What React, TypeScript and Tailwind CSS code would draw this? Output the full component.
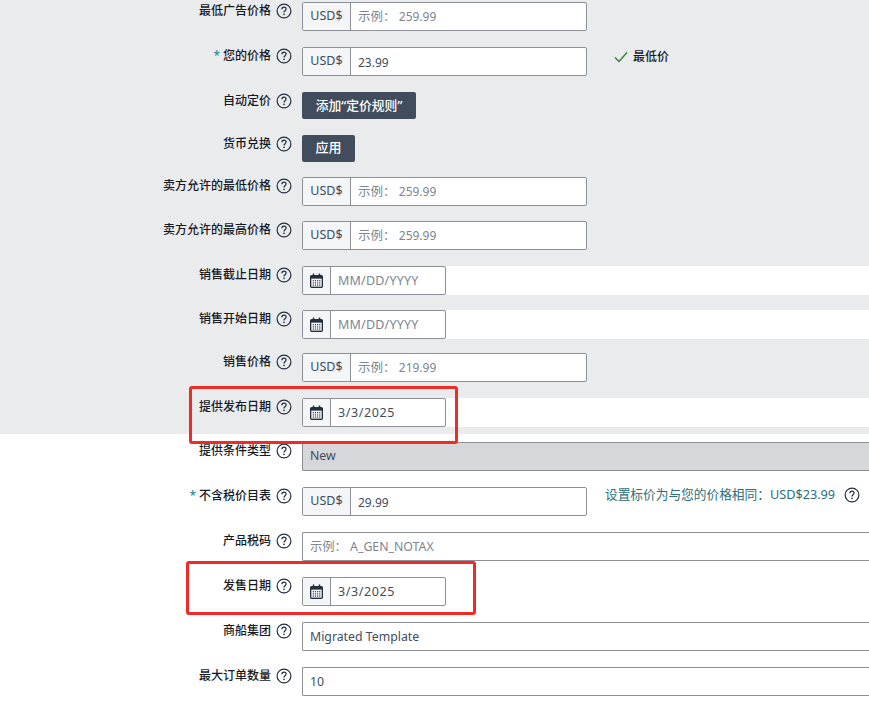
import React from "react";

function Help() {
  return (
    <svg width="16" height="16" viewBox="0 0 16 16" fill="none" className="shrink-0">
      <circle cx="8" cy="8" r="6.9" stroke="#232f3e" strokeWidth="1.2" />
      <path d="M5.9 6.3C5.9 5 6.9 4.2 8 4.2c1.2 0 2.1.8 2.1 1.9 0 1.7-2.1 1.7-2.1 3.4" stroke="#232f3e" strokeWidth="1.2" />
      <circle cx="8" cy="11.4" r="0.8" fill="#232f3e" />
    </svg>
  );
}

function Calendar() {
  return (
    <svg width="13" height="15" viewBox="0 0 14 16" className="shrink-0 -mt-[1px]">
      <path d="M3 0.5h1.6V2h4.8V0.5H11V2h1.2C13.2 2 14 2.8 14 3.8v10.4c0 1-.8 1.8-1.8 1.8H1.8C.8 16 0 15.2 0 14.2V3.8C0 2.8.8 2 1.8 2H3z" fill="#232f3e" />
      <rect x="1.4" y="6" width="11.2" height="8.6" fill="#f3f4f5" />
      {[7.6, 10, 12.3].map((y) =>
        [3, 5.3, 7.6, 9.9].map((x) => <rect key={`${x}-${y}`} x={x} y={y} width="1.2" height="1.2" fill="#232f3e" />)
      )}
    </svg>
  );
}

function Label({ text, required }: { text: string; required?: boolean }) {
  return (
    <div className="w-[302px] shrink-0 flex justify-end items-start pr-[10px] pt-[1px]">
      <span className="text-[12px] leading-[16px] font-medium text-[#16191f] whitespace-nowrap">
        {required && <span className="text-[#2a8a9a] mr-[3px]">*</span>}
        {text}
      </span>
      <span className="ml-[5px]"><Help /></span>
    </div>
  );
}

function Money({ value, placeholder }: { value?: string; placeholder?: string }) {
  return (
    <div className="w-[285px] h-[29px] flex border border-[#8d9096] rounded-[2px] bg-white text-[12.5px] shrink-0">
      <div className="w-[48px] shrink-0 bg-[#f4f5f6] border-r border-[#8d9096] flex items-center justify-center text-[#414d5c]">USD$</div>
      <div className={`pl-[7px] flex items-center ${value ? "pt-[2px] text-[#414d5c] text-[12px]" : "pt-[1px] text-[#7d8590]"}`}>
        {value ?? (
          <>
            示例：&nbsp;<span className="text-[12px]">{placeholder}</span>
          </>
        )}
      </div>
    </div>
  );
}

function DateField({ value }: { value?: string }) {
  return (
    <div className="w-[144px] h-[29px] flex border border-[#8d9096] rounded-[2px] bg-white text-[12.5px] shrink-0">
      <div className="w-[28px] shrink-0 bg-[#f4f5f6] border-r border-[#8d9096] flex items-center justify-center"><Calendar /></div>
      <div className={`pl-[7px] pt-[1px] flex items-center ${value ? "text-[#414d5c] tracking-[0.6px]" : "text-[#7d8590] tracking-[0.2px]"}`}>{value ?? "MM/DD/YYYY"}</div>
    </div>
  );
}

function DateBox({ value }: { value?: string }) {
  return (
    <>
      <DateField value={value} />
      <div className="flex-1 h-[29px] bg-white" />
    </>
  );
}

function Wide({ value, placeholder, disabled }: { value?: string; placeholder?: string; disabled?: boolean }) {
  return (
    <div className={`flex-1 h-[29px] border-y border-l border-[#8d9096] rounded-l-[2px] flex items-center pl-[7px] text-[12.3px] ${disabled ? "bg-[#d5d7db]" : "bg-white pt-[1px]"} ${value ? "text-[#414d5c]" : "text-[#7d8590]"}`}>
      {value ?? placeholder}
    </div>
  );
}

export default function App() {
  return (
    <div className="relative w-[869px] h-[712px] overflow-hidden bg-white" style={{ fontFamily: '"Noto Sans", "Noto Sans CJK SC", sans-serif' }}>
      <section className="h-[434px] bg-[#e9ebed] pt-[2px] flex flex-col">
        <div className="flex h-[45px]"><Label text="最低广告价格" /><Money placeholder="259.99" /></div>
        <div className="flex h-[45px]">
          <Label text="您的价格" required />
          <Money value="23.99" />
          <div className="ml-[27px] h-[19px] pt-[1px] flex items-center text-[12px] font-medium text-[#16191f]">
            <svg width="14" height="12" viewBox="0 0 14 12" fill="none" className="mr-[5px]"><path d="M1 6.5L5 10.5L13 1.5" stroke="#3a7d3a" strokeWidth="1.4" /></svg>
            最低价
          </div>
        </div>
        <div className="flex h-[43px]">
          <Label text="自动定价" />
          <div className="h-[27px] w-[114px] flex items-center justify-center bg-[#414d5c] rounded-[2px] text-white text-[12.8px] font-medium whitespace-nowrap">添加“定价规则”</div>
        </div>
        <div className="flex h-[42px]">
          <Label text="货币兑换" />
          <div className="h-[27px] w-[53px] pb-[2px] flex items-center justify-center bg-[#414d5c] rounded-[2px] text-white text-[13px] font-medium whitespace-nowrap">应用</div>
        </div>
        <div className="flex h-[44px]"><Label text="卖方允许的最低价格" /><Money placeholder="259.99" /></div>
        <div className="flex h-[45px]"><Label text="卖方允许的最高价格" /><Money placeholder="259.99" /></div>
        <div className="flex h-[44px]"><Label text="销售截止日期" /><DateBox /></div>
        <div className="flex h-[43px]"><Label text="销售开始日期" /><DateBox /></div>
        <div className="flex h-[45px]"><Label text="销售价格" /><Money placeholder="219.99" /></div>
        <div className="flex h-[36px]"><Label text="提供发布日期" /><DateBox value="3/3/2025" /></div>
      </section>
      <section className="pt-[8px] flex flex-col">
        <div className="flex h-[45px]"><Label text="提供条件类型" /><Wide value="New" disabled /></div>
        <div className="flex h-[45px]">
          <Label text="不含税价目表" required />
          <Money value="29.99" />
          <div className="ml-[18px] h-[16px] flex items-center text-[12.7px] text-[#2b6f7a] whitespace-nowrap">
            设置标价为与您的价格相同：USD$23.99
            <span className="ml-[9px]"><Help /></span>
          </div>
        </div>
        <div className="flex h-[45px]"><Label text="产品税码" /><Wide placeholder="示例： A_GEN_NOTAX" /></div>
        <div className="flex h-[45px]"><Label text="发售日期" /><DateField value="3/3/2025" /></div>
        <div className="flex h-[45px]"><Label text="商船集团" /><Wide value="Migrated Template" /></div>
        <div className="flex h-[45px]"><Label text="最大订单数量" /><Wide value="10" /></div>
      </section>
      <div className="absolute left-[189px] top-[386px] w-[269px] h-[58px] border-[3px] border-[#ee2b24] rounded-[3px]" />
      <div className="absolute left-[186px] top-[561px] w-[290px] h-[54px] border-[3px] border-[#ee2b24] rounded-[3px]" />
    </div>
  );
}
